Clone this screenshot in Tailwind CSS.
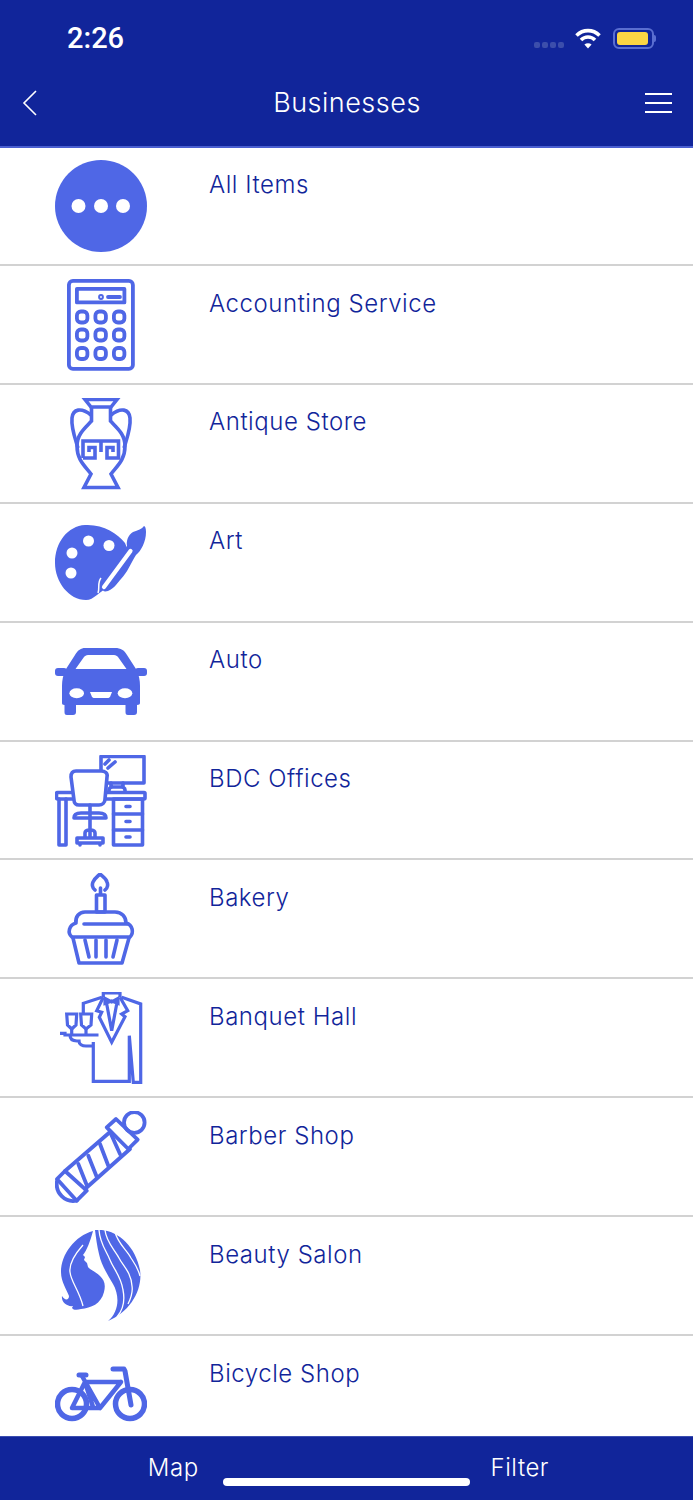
<!doctype html>
<html lang="en">
<head>
<meta charset="utf-8">
<script src="https://cdn.jsdelivr.net/npm/@tailwindcss/browser@4"></script>
<title>Businesses</title>
</head>
<body class="bg-white">
<div class="relative flex flex-col h-[1500px] w-[693px] overflow-hidden font-['Inter',sans-serif] font-light">

  <!-- top bars -->
  <header class="bg-[#11259a] h-[148px] border-b-2 border-[#4a5fd0] shrink-0">
    <div class="flex items-center justify-between h-[76px] pl-[67px] pr-[37px]">
      <span class="font-['Roboto',sans-serif] font-medium text-[29px] text-white mt-[2px]">2:26</span>
      <div class="flex items-center">
        <div class="flex gap-[2px] mt-[14px] mr-[11px]">
          <i class="block w-[6px] h-[6px] rounded-[2px] bg-[#3c4eab]"></i>
          <i class="block w-[6px] h-[6px] rounded-[2px] bg-[#3c4eab]"></i>
          <i class="block w-[6px] h-[6px] rounded-[2px] bg-[#3c4eab]"></i>
          <i class="block w-[6px] h-[6px] rounded-[2px] bg-[#3c4eab]"></i>
        </div>
        <svg width="26" height="21" viewBox="0 0 26 21" fill="none" stroke="#fff" stroke-width="3.600">
          <path d="M1.500 7.500C8 1 18 1 24.500 7.500"/>
          <path d="M6 12C10 8 16 8 20 12"/>
          <path d="M13 20.500 9.400 16.500C11.500 14.700 14.500 14.700 16.600 16.500Z" fill="#fff" stroke="none"/>
        </svg>
        <div class="flex items-center ml-[12px]">
          <div class="w-[41px] h-[21px] rounded-[6px] border-2 border-[#5a6ed0] p-[2px]">
            <div class="w-[31px] h-[13px] rounded-[3px] bg-[#fbd544]"></div>
          </div>
          <div class="w-[2px] h-[7px] rounded-r bg-[#5a6ed0]"></div>
        </div>
      </div>
    </div>
    <div class="grid grid-cols-[1fr_auto_1fr] items-center h-[54px] pl-[22px] pr-[21px]">
      <svg width="15" height="26" viewBox="0 0 15 26" fill="none" stroke="#fff" stroke-width="1.600"><path d="M14 1 2 13l12 12"/></svg>
      <h1 class="font-light text-[27px] tracking-[0.5px] text-white">Businesses</h1>
      <div class="flex flex-col gap-[7px] w-[27px] justify-self-end">
        <i class="block h-[2px] bg-white"></i>
        <i class="block h-[2px] bg-white"></i>
        <i class="block h-[2px] bg-white"></i>
      </div>
    </div>
  </header>

  <!-- list -->
  <main class="flex-1 overflow-hidden text-[24px] tracking-[0.55px]">

    <div class="flex items-start h-[118px] border-b-2 border-[#d2d2d2] pl-[55px] pt-[12px] text-[#4f67e6]">
      <svg class="w-[92px] h-[92px] shrink-0" viewBox="0 0 92 92"><circle cx="46" cy="46" r="46" fill="currentColor"/><circle cx="23.500" cy="46" r="7" fill="#fff"/><circle cx="46" cy="46" r="7" fill="#fff"/><circle cx="68" cy="46" r="7" fill="#fff"/></svg>
      <span class="ml-[62px] mt-[6.500px] text-[#11259a]">All Items</span>
    </div>

    <div class="flex items-start h-[118.900px] border-b-2 border-[#d2d2d2] pl-[55px] pt-[13px] text-[#4f67e6]">
      <svg class="w-[92px] h-[92px] shrink-0" viewBox="0 0 92 92" fill="none" stroke="currentColor" stroke-width="3.800" stroke-linecap="round" stroke-linejoin="round">
        <rect x="13.900" y="1.900" width="64" height="88" rx="4"/>
        <rect x="21.900" y="9.900" width="47.500" height="13.500"/>
        <circle cx="46" cy="18" r="1"/><path d="M53 18H65"/>
        <rect x="21.900" y="32.500" width="10.500" height="11" rx="4"/><rect x="40.400" y="32.500" width="10.500" height="11" rx="4"/><rect x="58.900" y="32.500" width="10.500" height="11" rx="4"/>
        <rect x="21.900" y="50.500" width="10.500" height="11" rx="4"/><rect x="40.400" y="50.500" width="10.500" height="11" rx="4"/><rect x="58.900" y="50.500" width="10.500" height="11" rx="4"/>
        <rect x="21.900" y="69" width="10.500" height="11" rx="4"/><rect x="40.400" y="69" width="10.500" height="11" rx="4"/><rect x="58.900" y="69" width="10.500" height="11" rx="4"/>
      </svg>
      <span class="ml-[62px] mt-[6.500px] text-[#11259a]">Accounting Service</span>
    </div>

    <div class="flex items-start h-[118.900px] border-b-2 border-[#d2d2d2] pl-[55px] pt-[13px] text-[#4f67e6]">
      <svg class="w-[92px] h-[92px] shrink-0" viewBox="0 0 92 92" fill="none" stroke="currentColor" stroke-width="3.600" stroke-linejoin="miter">
        <path d="M30 1.500H62L56 9H36Z"/>
        <path d="M36.500 9V23C30 30 22 36 22 48C22 62 30 68 36 76L29 89.500H63L56 76C62 68 70 62 70 48C70 36 62 30 55.500 23V9"/>
        <path d="M36 17C26 9 18 11 17 20C16 30 20 40 23 50M56 17C66 9 74 11 75 20C76 30 72 40 69 50"/>
        <path d="M28 60V43H63.500V60H52V49.500H58V54M28 60H40V49.500H34V54M46 43V54"/>
      </svg>
      <span class="ml-[62px] mt-[6.500px] text-[#11259a]">Antique Store</span>
    </div>

    <div class="flex items-start h-[118.900px] border-b-2 border-[#d2d2d2] pl-[55px] pt-[13px] text-[#4f67e6]">
      <svg class="w-[92px] h-[92px] shrink-0" viewBox="0 0 92 92">
        <path fill="currentColor" d="M30 8C48 7 62 16 70 26L74 36C70 47 62 60 52 70C48 74 44 76 42 78C38 81 35 83 31 83C14 83 0 65 0 46C0 25 13 9 30 8Z"/>
        <path fill="currentColor" d="M48 71C47 74 49 75 53 74C60 71 63 65 66 62C72 56 76 46 81 38C86 34 91 25 91 15C91 11 90 9 89 9C87 12 83 13 78 15C73 18 71 24 72 29C65 41 56 55 48 71Z"/>
        <path fill="none" stroke="#fff" stroke-width="4.200" stroke-linecap="round" d="M49 70 75.500 34"/>
        <path fill="none" stroke="#fff" stroke-width="1.500" d="M43 76C45 71 42 66 46 61"/>
        <circle cx="33.500" cy="24" r="5.500" fill="#fff"/><circle cx="54" cy="28.500" r="5.500" fill="#fff"/><circle cx="17" cy="36" r="5.500" fill="#fff"/><circle cx="16" cy="56" r="5.500" fill="#fff"/>
      </svg>
      <span class="ml-[62px] mt-[6.500px] text-[#11259a]">Art</span>
    </div>

    <div class="flex items-start h-[118.900px] border-b-2 border-[#d2d2d2] pl-[55px] pt-[13px] text-[#4f67e6]">
      <svg class="w-[92px] h-[92px] shrink-0" viewBox="0 0 92 92">
        <rect x="0" y="32" width="12" height="8" rx="3" fill="currentColor"/><rect x="80" y="32" width="12" height="8" rx="3" fill="currentColor"/>
        <path fill="currentColor" fill-rule="evenodd" d="M30 12H60C66 12 69 14 72 19L81 33C84 39 85 44 85 50V67C85 68 84 69 82 69V76C82 78 81 79 79 79H73C71 79 70.500 78 70.500 76V69H21V76C21 78 20 79 18 79H12C10 79 9.500 78 9.500 76V69C7.500 69 7 68 7 67V50C7 44 8 39 11 33L20 19C23 14 26 12 30 12ZM33 19C31 19 30 20 29 21L20.500 33H71.500L63 21C62 20 61 19 59 19Z"/>
        <ellipse cx="21.700" cy="57.300" rx="7.300" ry="5" fill="#fff"/><ellipse cx="70" cy="57.300" rx="7.300" ry="5" fill="#fff"/>
        <path fill="#fff" d="M35 56H57L55 61C54 62 53 62 52 62H40C39 62 38 62 37 61Z"/>
      </svg>
      <span class="ml-[62px] mt-[6.500px] text-[#11259a]">Auto</span>
    </div>

    <div class="flex items-start h-[118.900px] border-b-2 border-[#d2d2d2] pl-[55px] pt-[13px] text-[#4f67e6]">
      <svg class="w-[92px] h-[92px] shrink-0" viewBox="0 0 92 92" fill="none" stroke="currentColor" stroke-width="3.600" stroke-linejoin="round" stroke-linecap="round">
        <rect x="46" y="1.500" width="43" height="26.500"/>
        <path d="M50 9 54 5M53 13 60 7"/>
        <path d="M56 28V32M68 28V32M54 37V35C54 33 56 32 58 32H66C68 32 70 33 70 35V37"/>
        <rect x="1.500" y="37.500" width="88.500" height="6.500" rx="1"/>
        <path d="M4 44V90H11V44"/>
        <rect x="58.500" y="44" width="29" height="46"/>
        <path d="M58.500 59H87.500M58.500 75H87.500M71 51.500H75M71 66.500H75M71 82H75"/>
        <path fill="#fff" d="M21 16H46C50 16 53 18 52 22L50 44C50 48 47 50 44 50H24C21 50 19 48 19 45L16 22C16 18 18 16 21 16Z"/>
        <path d="M35 50V83M19 63C19 59 22 58 26 58H44C48 58 51 59 51 63ZM30 83V78C30 76 32 75 35 75C38 75 40 76 40 78V83M22 83H48V88H22ZM25 88V90M45 88V90"/>
      </svg>
      <span class="ml-[62px] mt-[6.500px] text-[#11259a]">BDC Offices</span>
    </div>

    <div class="flex items-start h-[118.900px] border-b-2 border-[#d2d2d2] pl-[55px] pt-[13px] text-[#4f67e6]">
      <svg class="w-[92px] h-[92px] shrink-0" viewBox="0 0 92 92" fill="none" stroke="currentColor" stroke-width="3.600" stroke-linejoin="round" stroke-linecap="round">
        <path d="M40 17C37 15 37 11 38 9C40 5 43 3 45 1C47 3 51 5 52 9C53 11 53 15 50 17"/>
        <path d="M45.500 15V21"/>
        <rect x="41.500" y="22" width="8.500" height="17"/>
        <path d="M30 39H60C67 39 71 44 71 50C78 52 79 60 75 64H17C12 60 14 52 21 50C20 44 24 39 30 39Z"/>
        <path d="M29 51H72"/>
        <path d="M18 65 24 90H67L74 65M30 67 34 84M41 67V84M51 67V84M62 67 58 84"/>
      </svg>
      <span class="ml-[62px] mt-[6.500px] text-[#11259a]">Bakery</span>
    </div>

    <div class="flex items-start h-[118.900px] border-b-2 border-[#d2d2d2] pl-[55px] pt-[13px] text-[#4f67e6]">
      <svg class="w-[92px] h-[92px] shrink-0" viewBox="0 0 92 92" fill="none" stroke="currentColor" stroke-width="3.200" stroke-linejoin="miter">
        <path d="M48.300 5V1H65V5"/>
        <path d="M47 5.300 28.300 11.300V22M66.700 5.300 85.700 12V90.300H78.300L74.300 43.700V89.300H38.300V50"/>
        <path d="M48.300 5.300 41.700 18.700 46.700 20.300 44.300 25.300 56.700 50.300 70 24.700 66.700 22 72.700 18.700 65 5.300"/>
        <path d="M51.700 12 56.700 38.700 61.700 12M50 6.500 56.700 10 63 6.500V11.500L56.700 9 50 11.500Z"/>
        <path d="M11.700 22H21.700L21 33 16.700 37 12.500 33ZM25.700 22H36.700L36 33 31 37 26.500 33Z"/>
        <path d="M16.700 37V43M31 37V43M5 41.300H10V43H43.500M15 43C15 48 18 49 22 49H24C24 52 27 54 31 54H38"/>
      </svg>
      <span class="ml-[62px] mt-[6.500px] text-[#11259a]">Banquet Hall</span>
    </div>

    <div class="flex items-start h-[118.900px] border-b-2 border-[#d2d2d2] pl-[55px] pt-[13px] text-[#4f67e6]">
      <svg class="w-[92px] h-[92px] shrink-0" viewBox="0 0 92 92" fill="none" stroke="currentColor" stroke-width="3.800" stroke-linejoin="round" stroke-linecap="round">
        <circle cx="79.300" cy="11.500" r="10.300"/>
        <path d="M51.700 16.300 61 8 82.700 28.700 73.300 38Z"/>
        <path d="M55 21 10 60M75 38 30 78"/>
        <path d="M2 68 10 60 31.700 79.700 21.700 89.700Z"/>
        <path d="M2 70C0 82 10 92 21.700 89.700"/>
        <path d="M23.300 53 31.700 74M33.300 44.700 41.700 65.700M45 33 53.300 54.700M56 23 65 43"/>
      </svg>
      <span class="ml-[62px] mt-[6.500px] text-[#11259a]">Barber Shop</span>
    </div>

    <div class="flex items-start h-[118.900px] border-b-2 border-[#d2d2d2] pl-[55px] pt-[13px] text-[#4f67e6]">
      <svg class="w-[92px] h-[92px] shrink-0" viewBox="0 0 92 92">
        <path fill="currentColor" d="M38 1C20 6 6 24 6 42C6 52 12 60 14 66C14 70 10 71 7 66C6 72 12 77 18 76C15 79 20 81 26 79C36 78 46 74 49 62C51 54 49 50 45 46C41 42 34 39 33 37L32 33L29 30L30 27L28 25C32 20 35 12 38 1Z"/>
        <path fill="currentColor" d="M40 0C60 -2 80 14 85 40C88 60 75 82 53 91C64 82 65 66 58 54C52 44 46 34 44 24C42 16 41 8 40 0Z"/>
        <g fill="none" stroke="#fff" stroke-width="1.300">
          <path d="M44 0C45 14 51 20 55 30C59 40 66 46 68 60C70 70 68 80 62 87"/>
          <path d="M50 0C51 12 60 20 64 28C68 36 76 42 77 56C78 62 76 68 73 74"/>
          <path d="M60 2C63 14 72 20 76 28C80 34 83 38 85 46"/>
          <path d="M28 15C20 24 14 34 15 42C16 52 24 60 28 76"/>
        </g>
      </svg>
      <span class="ml-[62px] mt-[6.500px] text-[#11259a]">Beauty Salon</span>
    </div>

    <div class="flex items-start h-[118.900px] pl-[55px] pt-[13px] text-[#4f67e6]">
      <svg class="w-[92px] h-[92px] shrink-0" viewBox="0 0 92 92" fill="none" stroke="currentColor" stroke-width="4" stroke-linecap="round" stroke-linejoin="round">
        <circle cx="17" cy="55" r="14.500" stroke-width="5.500"/><circle cx="75" cy="55" r="14.500" stroke-width="5.500"/>
        <path d="M24 26H31M58 20H69L70 22 76 56" stroke-width="5"/>
        <path d="M27 27 45 59H17L30 33H66M30 33 38 58M45 59 66 33" stroke-width="4.500"/>
      </svg>
      <span class="ml-[62px] mt-[6.500px] text-[#11259a]">Bicycle Shop</span>
    </div>
  </main>

  <!-- bottom bar -->
  <footer class="relative flex bg-[#11259a] h-[64px] border-t border-[#3b4db0] text-white text-[24px] tracking-[0.55px] shrink-0">
    <div class="flex-1 flex justify-center pt-[13px]">Map</div>
    <div class="flex-1 flex justify-center pt-[13px]">Filter</div>
    <div class="absolute left-[223px] top-[41px] w-[247px] h-[8px] rounded-full bg-white"></div>
  </footer>
</div>
</body>
</html>
